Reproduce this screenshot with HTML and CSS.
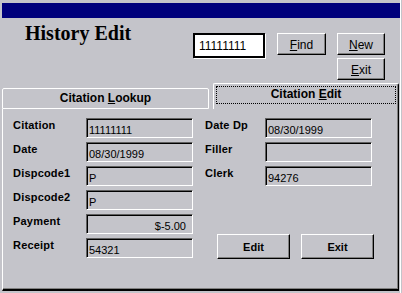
FILE: index.html
```html
<!DOCTYPE html>
<html lang="en">
<head>
    <meta charset="UTF-8">
    <meta name="viewport" content="width=device-width, initial-scale=1.0">
    <title>History Edit</title>
    <link rel="stylesheet" href="styles.css">
</head>
<body>
    <div class="window">
        <div class="titlebar"></div>

        <div class="header">
            <h1 class="title">History Edit</h1>
            <div class="text-input">11111111</div>
            <button class="btn btn-find"><u>F</u>ind</button>
            <div class="btn-stack">
                <button class="btn"><u>N</u>ew</button>
                <button class="btn"><u>E</u>xit</button>
            </div>
        </div>

        <div class="tabs">
            <div class="tab">Citation <u>L</u>ookup</div>
            <div class="tab tab-active"><span class="focus">Citation <u>E</u>dit</span></div>
        </div>

        <div class="panel">
            <div class="fields fields-left">
                <label class="lbl">Citation</label>
                <div class="field">11111111</div>
                <label class="lbl">Date</label>
                <div class="field">08/30/1999</div>
                <label class="lbl">Dispcode1</label>
                <div class="field">P</div>
                <label class="lbl">Dispcode2</label>
                <div class="field">P</div>
                <label class="lbl">Payment</label>
                <div class="field field-money">$-5.00</div>
                <label class="lbl">Receipt</label>
                <div class="field">54321</div>
            </div>

            <div class="right-col">
                <div class="fields fields-right">
                    <label class="lbl">Date Dp</label>
                    <div class="field">08/30/1999</div>
                    <label class="lbl">Filler</label>
                    <div class="field"></div>
                    <label class="lbl">Clerk</label>
                    <div class="field">94276</div>
                </div>
                <div class="actions">
                    <button class="btn btn-big">Edit</button>
                    <button class="btn btn-big">Exit</button>
                </div>
            </div>
        </div>
    </div>
</body>
</html>
```

FILE: styles.css
```css
body {
    margin: 0;
    background: #c4c4ca;
    font-family: "Liberation Sans", Arial, sans-serif;
    color: #000;
}

.window {
    width: 401px;
    height: 293px;
    box-sizing: border-box;
    padding: 3px 0 0 2px;
    border-right: 1px solid #fff;
    background: #c4c4ca;
}

.titlebar {
    height: 15px;
    background: #00007c;
}

/* top row: title, lookup box, buttons */
.header {
    display: flex;
    height: 65px;
}

.title {
    width: 191px;
    box-sizing: border-box;
    margin: 3px 0 0 0;
    padding-left: 23px;
    font-family: "Liberation Serif", "Times New Roman", serif;
    font-size: 20px;
    line-height: 24px;
    font-weight: bold;
}

.text-input {
    width: 72px;
    height: 25px;
    box-sizing: border-box;
    margin-top: 15px;
    padding: 4px 0 0 4px;
    background: #fff;
    border: 2px solid #000;
    box-shadow: 1px 1px 0 #fff;
    font-size: 12px;
    line-height: 14px;
}

.btn {
    display: block;
    padding: 0;
    margin: 0;
    background: #c4c4ca;
    border: 1px solid;
    border-color: #fff #000 #000 #fff;
    box-shadow: inset -1px -1px 0 #808080;
    font-family: "Liberation Sans", Arial, sans-serif;
    font-size: 12px;
    line-height: 14px;
    color: #000;
    box-sizing: border-box;
}

.btn-find {
    width: 49px;
    height: 22px;
    margin: 15px 0 0 12px;
    padding-top: 1px;
}

.btn-stack {
    display: flex;
    flex-direction: column;
    gap: 3px;
    margin: 15px 0 0 11px;
}

.btn-stack .btn {
    width: 48px;
    height: 22px;
    padding-top: 1px;
}

/* tabs */
.tabs {
    display: flex;
    align-items: flex-end;
    width: 397px;
    height: 26px;
    gap: 4px;
}

.tab {
    width: 207px;
    height: 21px;
    box-sizing: border-box;
    border: 1px solid #fff;
    border-radius: 2px 2px 0 0;
    text-align: center;
    font-size: 12px;
    font-weight: bold;
    line-height: 18px;
}

.tab-active {
    width: 186px;
    height: 26px;
    padding: 2px 2px 0 2px;
    border-bottom: none;
    border-right: 1px solid #000;
    box-shadow: inset -1px 0 0 #808080;
}

.focus {
    display: block;
    height: 18px;
    box-sizing: border-box;
    border: 1px dotted #000;
    line-height: 15px;
}

/* body of the tab */
.panel {
    display: flex;
    width: 397px;
    height: 182px;
    box-sizing: border-box;
    padding: 9px 0 0 10px;
    border-left: 1px solid #fff;
    border-right: 1px solid #000;
    border-bottom: 2px solid #000;
    box-shadow: inset -1px -1px 0 #808080;
}

.fields {
    display: grid;
    grid-auto-rows: 20px;
    row-gap: 4px;
}

.fields-left {
    grid-template-columns: 73px 107px;
}

.fields-right {
    grid-template-columns: 60px 107px;
}

.right-col {
    margin-left: 12px;
}

.lbl {
    font-size: 11px;
    font-weight: bold;
    line-height: 14px;
    letter-spacing: 0.2px;
}

.field {
    box-sizing: border-box;
    padding: 4px 4px 0 2px;
    border: 1px solid;
    border-color: #606060 #fff #fff #606060;
    box-shadow: inset 1px 1px 0 #000;
    font-size: 11px;
    line-height: 14px;
    white-space: nowrap;
}

.field-money {
    text-align: right;
    padding-right: 6px;
}

.actions {
    display: flex;
    gap: 11px;
    margin: 48px 0 0 12px;
}

.btn-big {
    width: 73px;
    height: 25px;
    font-size: 11px;
    font-weight: bold;
}
```
